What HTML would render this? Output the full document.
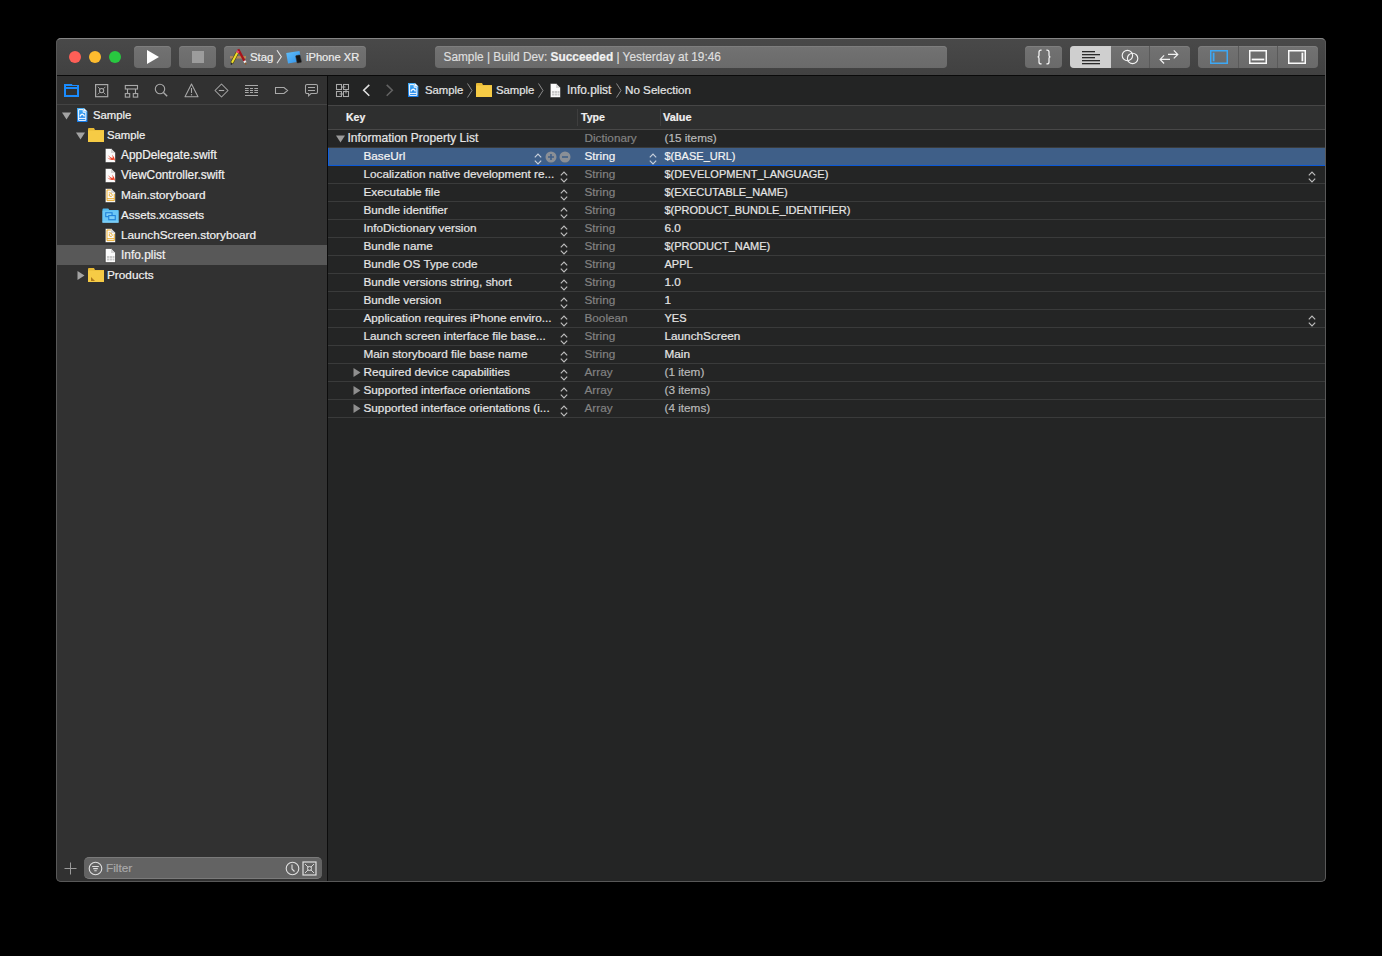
<!DOCTYPE html><html><head><meta charset="utf-8"><style>
*{margin:0;padding:0;box-sizing:border-box}
html,body{width:1382px;height:956px;background:#000;overflow:hidden}
body{font-family:"Liberation Sans",sans-serif;position:relative}
.r{position:absolute}
.t{position:absolute;white-space:nowrap;line-height:1;-webkit-text-stroke:0.2px currentColor}
.s{position:absolute;overflow:visible}
.btn{position:absolute;top:46px;height:22px;border-radius:4px;background:linear-gradient(#727272,#6a6a6a);box-shadow:inset 0 1px 0 #7e7e7e}
.light{position:absolute;top:51px;width:12px;height:12px;border-radius:50%}
.line{position:absolute;height:1px}
</style></head><body>
<div class="r" style="left:56px;top:38px;width:1270px;height:844px;border-radius:5px;background:#313131;overflow:hidden">
<div class="r" style="left:0;top:0;width:1270px;height:37px;background:linear-gradient(#494949,#414141)"></div>
<div class="r" style="left:0;top:37px;width:1270px;height:1px;background:#0a0a0a"></div>
<div class="r" style="left:1px;top:38px;width:270px;height:806px;background:#313131"></div>
<div class="r" style="left:271px;top:38px;width:1px;height:806px;background:#0c0c0c"></div>
<div class="r" style="left:272px;top:38px;width:998px;height:806px;background:#242525"></div>
</div>
<div class="light" style="left:69px;background:#fe5f57"></div>
<div class="light" style="left:89px;background:#febc2e"></div>
<div class="light" style="left:109px;background:#28c840"></div>
<div class="btn" style="left:134px;width:37px"></div>
<div class="btn" style="left:179px;width:37px"></div>
<div class="btn" style="left:224px;width:142px"></div>
<div class="btn" style="left:435px;width:512px"></div>
<div class="btn" style="left:1025px;width:37px"></div>
<div class="btn" style="left:1070px;width:120px;overflow:hidden"><div class="r" style="left:0;top:0;width:41px;height:22px;background:#cfcfcf"></div><div class="r" style="left:79px;top:0;width:1px;height:22px;background:#5a5a5a"></div></div>
<div class="btn" style="left:1198px;width:120px"><div class="r" style="left:40px;top:0;width:1px;height:22px;background:#5a5a5a"></div><div class="r" style="left:79px;top:0;width:1px;height:22px;background:#5a5a5a"></div></div>
<svg class="s" style="left:146px;top:49px;" width="14" height="16" viewBox="0 0 14 16"><path d="M1 1 L13 8 L1 15 Z" fill="#fff"/></svg>
<div class="r" style="left:192px;top:51px;width:12px;height:12px;background:#9c9c9c"></div>
<svg class="s" style="left:229px;top:47px;" width="18" height="20" viewBox="0 0 18 20"><rect x="1" y="9.1" width="16" height="2.4" fill="#b98a55"/><path d="M9.2 2.2 L15.6 14.2" stroke="#a8121a" stroke-width="2.4"/><path d="M15.4 13.8 L16.4 15.8" stroke="#f0f0f0" stroke-width="2.5"/><path d="M16.3 15.7 L16.9 17.6" stroke="#8a5a2a" stroke-width="1.6"/><path d="M8.5 5.3 L2.8 16" stroke="#4a3a08" stroke-width="3.2"/><path d="M8.5 5.3 L2.8 16" stroke="#ecdf2c" stroke-width="2.1"/><path d="M9.3 3.9 L8.3 5.8" stroke="#e8406a" stroke-width="2.6"/><path d="M2.9 15.8 L2.1 17.6" stroke="#2a2a2a" stroke-width="1.6"/></svg>
<div class="t" style="left:250px;top:52px;font-size:11.4px;color:#ececec;font-weight:normal;">Stag</div>
<svg class="s" style="left:276px;top:50px;" width="7" height="14" viewBox="0 0 7 14"><path d="M1 0.3 L5.3 6.8 L1 13.3" stroke="#e4e4e4" stroke-width="1.1" fill="none"/></svg>
<svg class="s" style="left:285px;top:49px;" width="18" height="16" viewBox="0 0 18 16"><defs><linearGradient id="dg" x1="0" y1="0" x2="1" y2="1"><stop offset="0" stop-color="#63c0fa"/><stop offset="1" stop-color="#2f8fe8"/></linearGradient></defs><path d="M1.2 3.9 L14.5 1.9 L16.3 12.3 L3 14.4 Z" fill="url(#dg)"/><rect x="11.3" y="6.2" width="4.6" height="7.6" rx="0.8" transform="rotate(-12 13.6 10)" fill="#141414" stroke="#3a3a3a" stroke-width="0.5"/></svg>
<div class="t" style="left:306px;top:52px;font-size:11.15px;color:#ececec;font-weight:normal;">iPhone XR</div>
<div class="t" style="left:443.5px;top:52px;font-size:11.85px;color:#dedede;font-weight:normal;">Sample | Build Dev: <b style="color:#f2f2f2">Succeeded</b> | Yesterday at 19:46</div>
<svg class="s" style="left:1036px;top:49px;" width="16" height="16" viewBox="0 0 16 16"><path d="M5.6 1 H5 Q3 1 3 3 V6.2 Q3 7.9 1.6 7.9 Q3 7.9 3 9.6 V12.9 Q3 14.9 5 14.9 H5.6 M10.4 1 H11 Q13 1 13 3 V6.2 Q13 7.9 14.4 7.9 Q13 7.9 13 9.6 V12.9 Q13 14.9 11 14.9 H10.4" stroke="#f4f4f4" stroke-width="1.25" fill="none"/></svg>
<svg class="s" style="left:1082px;top:50px;" width="19" height="15" viewBox="0 0 19 15"><rect x="0" y="1" width="13" height="1.3" fill="#2b2b2b"/><rect x="0" y="4" width="18" height="1.3" fill="#2b2b2b"/><rect x="0" y="7" width="13" height="1.3" fill="#2b2b2b"/><rect x="0" y="10" width="18" height="1.3" fill="#2b2b2b"/><rect x="0" y="13" width="18" height="1.3" fill="#2b2b2b"/></svg>
<svg class="s" style="left:1120px;top:48px;" width="20" height="18" viewBox="0 0 20 18"><circle cx="7.4" cy="7.5" r="5.2" stroke="#f2f2f2" stroke-width="1.15" fill="none"/><circle cx="12.6" cy="10.4" r="5.2" stroke="#f2f2f2" stroke-width="1.15" fill="none"/></svg>
<svg class="s" style="left:1158px;top:48px;" width="21" height="18" viewBox="0 0 21 18"><path d="M10 6.4 H19.5 M15.8 2.3 L19.8 6.4 L15.8 10.4" stroke="#f2f2f2" stroke-width="1.2" fill="none"/><path d="M12 11.4 H2.3 M6.1 7.4 L2.1 11.4 L6.1 15.5" stroke="#f2f2f2" stroke-width="1.2" fill="none"/></svg>
<svg class="s" style="left:1210px;top:50px;" width="18" height="14" viewBox="0 0 18 14"><rect x="0.75" y="0.75" width="16.5" height="12.5" stroke="#3da8f5" stroke-width="1.5" fill="none"/><rect x="2.7" y="2.7" width="1.8" height="8.6" fill="#3da8f5"/></svg>
<svg class="s" style="left:1249px;top:50px;" width="18" height="14" viewBox="0 0 18 14"><rect x="0.75" y="0.75" width="16.5" height="12.5" stroke="#fafafa" stroke-width="1.5" fill="none"/><rect x="2.7" y="8.6" width="12.6" height="1.8" fill="#fafafa"/></svg>
<svg class="s" style="left:1288px;top:50px;" width="18" height="14" viewBox="0 0 18 14"><rect x="0.75" y="0.75" width="16.5" height="12.5" stroke="#fafafa" stroke-width="1.5" fill="none"/><rect x="13.5" y="2.7" width="1.8" height="8.6" fill="#fafafa"/></svg>
<div class="line" style="left:57px;top:104px;width:270px;background:#434343"></div>
<svg class="s" style="left:63px;top:83px;" width="17" height="15" viewBox="0 0 17 15"><path fill-rule="evenodd" d="M1 1 H9.2 V2 H16 V14 H1 Z M3 3 H14 V4.1 H3 Z M3 5.9 H14 V12 H3 Z" fill="#1a8cff"/></svg>
<svg class="s" style="left:94px;top:83px;" width="15" height="15" viewBox="0 0 15 15"><rect x="1.6" y="1.6" width="12.1" height="12.1" stroke="#a9a9a9" stroke-width="1.2" fill="none"/><circle cx="7.6" cy="7.6" r="2.1" stroke="#a9a9a9" stroke-width="1.1" fill="none"/><path d="M3.8 3.8 L5.9 5.9 M11.4 3.8 L9.3 5.9 M3.8 11.4 L5.9 9.3 M11.4 11.4 L9.3 9.3" stroke="#a9a9a9" stroke-width="0.9"/></svg>
<svg class="s" style="left:124px;top:84px;" width="15" height="15" viewBox="0 0 15 15"><rect x="1.3" y="1.5" width="12.2" height="3.5" stroke="#a9a9a9" stroke-width="1.1" fill="none"/><rect x="1.3" y="9.6" width="4.4" height="3.5" stroke="#a9a9a9" stroke-width="1.1" fill="none"/><rect x="9.3" y="9.6" width="4.4" height="3.5" stroke="#a9a9a9" stroke-width="1.1" fill="none"/><path d="M3.5 5 V9.6 M11.5 5 V9.6" stroke="#a9a9a9" stroke-width="1.1"/></svg>
<svg class="s" style="left:154px;top:83px;" width="15" height="15" viewBox="0 0 15 15"><circle cx="6" cy="6" r="4.7" stroke="#a9a9a9" stroke-width="1.1" fill="none"/><path d="M9.4 9.4 L13.2 13.2" stroke="#a9a9a9" stroke-width="1.4"/></svg>
<svg class="s" style="left:184px;top:83px;" width="15" height="15" viewBox="0 0 15 15"><path d="M7.5 1 L14 13.7 H1 Z" stroke="#a9a9a9" stroke-width="1.05" fill="none" stroke-linejoin="round"/><path d="M7.5 5 V10" stroke="#a9a9a9" stroke-width="1.1"/><circle cx="7.5" cy="11.8" r="0.7" fill="#a9a9a9"/></svg>
<svg class="s" style="left:214px;top:83px;" width="15" height="15" viewBox="0 0 15 15"><path d="M7.5 1 L14 7.5 L7.5 14 L1 7.5 Z" stroke="#a9a9a9" stroke-width="1.05" fill="none" stroke-linejoin="round"/><path d="M4.8 7.5 H10.2" stroke="#a9a9a9" stroke-width="1.1"/></svg>
<svg class="s" style="left:244px;top:84px;" width="15" height="14" viewBox="0 0 15 14"><path d="M1 1.5 H14 M1 11.5 H14" stroke="#a9a9a9" stroke-width="1"/><path d="M1 4.5 H4.7 M6 4.5 H9 M10.3 4.5 H14" stroke="#a9a9a9" stroke-width="1"/><path d="M1 6.5 H4.7 M6 6.5 H9 M10.3 6.5 H14" stroke="#a9a9a9" stroke-width="1"/><path d="M1 8.5 H4.7 M6 8.5 H9 M10.3 8.5 H14" stroke="#a9a9a9" stroke-width="1"/></svg>
<svg class="s" style="left:274px;top:86px;" width="15" height="10" viewBox="0 0 15 10"><path d="M1.5 1.5 H10 L13.6 4.5 L10 7.5 H1.5 Z" stroke="#a9a9a9" stroke-width="1.05" fill="none"/></svg>
<svg class="s" style="left:304px;top:83px;" width="15" height="15" viewBox="0 0 15 15"><path d="M3 1.5 H12 Q13.5 1.5 13.5 3 V9 Q13.5 10.5 12 10.5 H7 L4.6 12.8 V10.5 H3 Q1.5 10.5 1.5 9 V3 Q1.5 1.5 3 1.5 Z" stroke="#a9a9a9" stroke-width="1.05" fill="none"/><path d="M4 4.5 H11 M4 7.5 H11" stroke="#a9a9a9" stroke-width="1"/></svg>
<div class="r" style="left:57px;top:245px;width:270px;height:20px;background:#585858"></div>
<svg class="s" style="left:62px;top:112px;" width="9" height="8" viewBox="0 0 9 8"><path d="M0 0.5 H9 L4.5 7.5 Z" fill="#a3a3a3"/></svg>
<svg class="s" style="left:77px;top:108px;" width="11" height="14" viewBox="0 0 11 14"><defs><linearGradient id="pg" x1="0" y1="0" x2="0" y2="1"><stop offset="0" stop-color="#45aef7"/><stop offset="1" stop-color="#1479e6"/></linearGradient></defs><path d="M0 0 H6.8 L10.4 3.6 V14 H0 Z" fill="url(#pg)"/><path d="M6.8 0 V3.6 H10.4 Z" fill="#f2f8ff"/><path d="M1.6 1.6 H6.2 V4.3 H8.8 V12.4 H1.6 Z" stroke="#f2f8ff" stroke-width="1" fill="none"/><path d="M3.3 8.6 V7.6 Q5.2 4.9 7.1 7.6 V8.6" stroke="#f2f8ff" stroke-width="1.4" fill="none"/><path d="M1.6 10.4 H8.8" stroke="#f2f8ff" stroke-width="1.1"/></svg>
<div class="t" style="left:93px;top:110px;font-size:11.3px;color:#f2f2f2;font-weight:normal;">Sample</div>
<svg class="s" style="left:76px;top:132px;" width="9" height="8" viewBox="0 0 9 8"><path d="M0 0.5 H9 L4.5 7.5 Z" fill="#a3a3a3"/></svg>
<svg class="s" style="left:88px;top:128px;" width="16" height="14" viewBox="0 0 16 14"><path d="M0 1 Q0 0 1 0 H6 L7 2 H16 V14 H0 Z" fill="#e7b935"/><rect x="0" y="2.5" width="16" height="11.5" fill="#f6cb45"/></svg>
<div class="t" style="left:107px;top:130px;font-size:11.3px;color:#f2f2f2;font-weight:normal;">Sample</div>
<svg class="s" style="left:104.5px;top:147.5px;" width="11" height="15" viewBox="0 0 11 15"><path d="M0.3 0.4 H6 L10.5 4.9 V14.6 H0.3 Z" fill="#fbfbfb" stroke="#151515" stroke-width="0.5"/><path d="M6 0.4 V4.9 H10.5 Z" fill="#d6d6d6"/><path d="M2 9.6 Q4.8 12.8 8.6 11.8 Q9.6 12.2 9.9 13 Q10.2 10 6.9 6.6 Q8 8.8 7.5 10.2 Q5.2 9.2 2.8 7 Q4.6 9.4 5.8 10.6 Q3.8 10.8 2 9.6 Z" fill="#f2452a"/></svg>
<div class="t" style="left:121px;top:150px;font-size:11.9px;color:#f2f2f2;font-weight:normal;">AppDelegate.swift</div>
<svg class="s" style="left:104.5px;top:167.5px;" width="11" height="15" viewBox="0 0 11 15"><path d="M0.3 0.4 H6 L10.5 4.9 V14.6 H0.3 Z" fill="#fbfbfb" stroke="#151515" stroke-width="0.5"/><path d="M6 0.4 V4.9 H10.5 Z" fill="#d6d6d6"/><path d="M2 9.6 Q4.8 12.8 8.6 11.8 Q9.6 12.2 9.9 13 Q10.2 10 6.9 6.6 Q8 8.8 7.5 10.2 Q5.2 9.2 2.8 7 Q4.6 9.4 5.8 10.6 Q3.8 10.8 2 9.6 Z" fill="#f2452a"/></svg>
<div class="t" style="left:121px;top:170px;font-size:11.9px;color:#f2f2f2;font-weight:normal;">ViewController.swift</div>
<svg class="s" style="left:104.5px;top:187.5px;" width="11" height="15" viewBox="0 0 11 15"><path d="M0.3 0.4 H6 L10.5 4.9 V14.6 H0.3 Z" fill="#fbfbfb" stroke="#151515" stroke-width="0.5"/><path d="M6 0.4 V4.9 H10.5 Z" fill="#d6d6d6"/><path d="M2 2 H5.8 M9.3 5.8 V12.6 H2 V2" stroke="#eaa925" stroke-width="0.95" fill="none"/><path d="M2 10.7 H9.3" stroke="#eaa925" stroke-width="0.95"/><path d="M3.8 4.8 Q6.8 4.2 7.4 7.4 Q6.6 9 4.6 8.2 Q3.6 7 4.6 6" stroke="#eaa925" stroke-width="0.9" fill="none"/></svg>
<div class="t" style="left:121px;top:190px;font-size:11.8px;color:#f2f2f2;font-weight:normal;">Main.storyboard</div>
<svg class="s" style="left:101.5px;top:207.5px;" width="17" height="15" viewBox="0 0 17 15"><path d="M0.5 1.5 Q0.5 0.5 1.5 0.5 H6.3 L7.3 2.1 H16.5 V14.5 H0.5 Z" fill="#52b9ef"/><rect x="0.5" y="2.6" width="16" height="11.9" fill="#6ac6f6"/><rect x="0.5" y="13.6" width="16" height="0.9" fill="#8ed6fa"/><rect x="3.75" y="4.75" width="6.3" height="3.9" stroke="#1f80d8" stroke-width="1.1" fill="#7fd0f8"/><rect x="6.75" y="7.6" width="6.5" height="4.1" stroke="#1f80d8" stroke-width="1.1" fill="#7fd0f8"/></svg>
<div class="t" style="left:121px;top:209px;font-size:11.6px;color:#f2f2f2;font-weight:normal;">Assets.xcassets</div>
<svg class="s" style="left:104.5px;top:227.5px;" width="11" height="15" viewBox="0 0 11 15"><path d="M0.3 0.4 H6 L10.5 4.9 V14.6 H0.3 Z" fill="#fbfbfb" stroke="#151515" stroke-width="0.5"/><path d="M6 0.4 V4.9 H10.5 Z" fill="#d6d6d6"/><path d="M2 2 H5.8 M9.3 5.8 V12.6 H2 V2" stroke="#eaa925" stroke-width="0.95" fill="none"/><path d="M2 10.7 H9.3" stroke="#eaa925" stroke-width="0.95"/><path d="M3.8 4.8 Q6.8 4.2 7.4 7.4 Q6.6 9 4.6 8.2 Q3.6 7 4.6 6" stroke="#eaa925" stroke-width="0.9" fill="none"/></svg>
<div class="t" style="left:121px;top:230px;font-size:11.8px;color:#f2f2f2;font-weight:normal;">LaunchScreen.storyboard</div>
<svg class="s" style="left:104.5px;top:247.5px;" width="11" height="15" viewBox="0 0 11 15"><path d="M0.3 0.4 H6 L10.5 4.9 V14.6 H0.3 Z" fill="#fbfbfb" stroke="#151515" stroke-width="0.5"/><path d="M6 0.4 V4.9 H10.5 Z" fill="#d6d6d6"/><g fill="#c9c9c9"><rect x="2" y="8" width="2.5" height="2"/><rect x="5" y="8" width="2.5" height="2"/><rect x="8" y="8" width="1.5" height="2"/><rect x="2" y="10.5" width="2.5" height="2"/><rect x="5" y="10.5" width="2.5" height="2"/><rect x="8" y="10.5" width="1.5" height="2"/></g></svg>
<div class="t" style="left:121px;top:250px;font-size:11.9px;color:#f2f2f2;font-weight:normal;">Info.plist</div>
<svg class="s" style="left:77px;top:271px;" width="8" height="9" viewBox="0 0 8 9"><path d="M0.5 0 V9 L7.5 4.5 Z" fill="#a3a3a3"/></svg>
<svg class="s" style="left:88px;top:268px;" width="16" height="14" viewBox="0 0 16 14"><path d="M0 1 Q0 0 1 0 H6 L7 2 H16 V14 H0 Z" fill="#e7b935"/><rect x="0" y="2.5" width="16" height="11.5" fill="#f6cb45"/><path d="M3 13 L3 9 L7 13 Z" fill="#b07a1a"/></svg>
<div class="t" style="left:107px;top:270px;font-size:11.8px;color:#f2f2f2;font-weight:normal;">Products</div>
<svg class="s" style="left:64px;top:862px;" width="13" height="13" viewBox="0 0 13 13"><path d="M6.5 0.5 V12.5 M0.5 6.5 H12.5" stroke="#9a9a9a" stroke-width="1"/></svg>
<div class="r" style="left:84px;top:857px;width:238px;height:22px;border-radius:5px;background:#636363;border-top:1px solid #7a7a7a;border-bottom:1px solid #7a7a7a"></div>
<svg class="s" style="left:88px;top:861px;" width="15" height="15" viewBox="0 0 15 15"><circle cx="7.5" cy="7.5" r="6.3" stroke="#e0e0e0" stroke-width="1.1" fill="none"/><path d="M4.2 5.5 H10.8 M5.2 7.6 H9.8 M6.3 9.7 H8.7" stroke="#e0e0e0" stroke-width="1.1"/></svg>
<div class="t" style="left:106px;top:863px;font-size:11.8px;color:#a9a9a9;font-weight:normal;">Filter</div>
<svg class="s" style="left:285px;top:861px;" width="15" height="15" viewBox="0 0 15 15"><circle cx="7.5" cy="7.5" r="6.3" stroke="#e0e0e0" stroke-width="1.1" fill="none"/><path d="M7 3.5 V8 L9.5 10.5" stroke="#e0e0e0" stroke-width="1.1" fill="none"/></svg>
<svg class="s" style="left:302px;top:861px;" width="15" height="15" viewBox="0 0 15 15"><rect x="1" y="1" width="13" height="13" stroke="#e0e0e0" stroke-width="1.2" fill="none"/><circle cx="7.5" cy="7.5" r="2" stroke="#e0e0e0" fill="none"/><path d="M3 3 L6 6 M12 3 L9 6 M3 12 L6 9 M12 12 L9 9" stroke="#e0e0e0" stroke-width="0.9"/></svg>
<div class="r" style="left:328px;top:76px;width:997px;height:29px;background:#232424"></div>
<div class="line" style="left:328px;top:105px;width:997px;background:#464646"></div>
<svg class="s" style="left:335px;top:83px;" width="15" height="15" viewBox="0 0 15 15"><rect x="1.5" y="1.5" width="5" height="5" stroke="#a9a9a9" stroke-width="1.05" fill="none"/><rect x="8.5" y="1.5" width="5" height="5" stroke="#a9a9a9" stroke-width="1.05" fill="none"/><rect x="1.5" y="8.5" width="5" height="5" stroke="#a9a9a9" stroke-width="1.05" fill="none"/><rect x="8.5" y="8.5" width="5" height="5" stroke="#a9a9a9" stroke-width="1.05" fill="none"/><path d="M6.5 4 H10.5 M11 6.5 V10.5 M4.5 11 H8.5" stroke="#a9a9a9" stroke-width="1"/></svg>
<svg class="s" style="left:362px;top:84px;" width="9" height="13" viewBox="0 0 9 13"><path d="M7.3 0.9 L1.7 6.3 L7.3 11.7" stroke="#e2e2e2" stroke-width="1.55" fill="none"/></svg>
<svg class="s" style="left:385px;top:84px;" width="9" height="13" viewBox="0 0 9 13"><path d="M1.7 0.9 L7.3 6.3 L1.7 11.7" stroke="#636363" stroke-width="1.55" fill="none"/></svg>
<svg class="s" style="left:408px;top:83px;" width="11" height="14" viewBox="0 0 11 14"><defs><linearGradient id="pg" x1="0" y1="0" x2="0" y2="1"><stop offset="0" stop-color="#45aef7"/><stop offset="1" stop-color="#1479e6"/></linearGradient></defs><path d="M0 0 H6.8 L10.4 3.6 V14 H0 Z" fill="url(#pg)"/><path d="M6.8 0 V3.6 H10.4 Z" fill="#f2f8ff"/><path d="M1.6 1.6 H6.2 V4.3 H8.8 V12.4 H1.6 Z" stroke="#f2f8ff" stroke-width="1" fill="none"/><path d="M3.3 8.6 V7.6 Q5.2 4.9 7.1 7.6 V8.6" stroke="#f2f8ff" stroke-width="1.4" fill="none"/><path d="M1.6 10.4 H8.8" stroke="#f2f8ff" stroke-width="1.1"/></svg>
<div class="t" style="left:425px;top:85px;font-size:11.3px;color:#e4e4e4;font-weight:normal;">Sample</div>
<svg class="s" style="left:466px;top:83px;" width="8" height="15" viewBox="0 0 8 15"><path d="M1.5 0.5 L6 7.5 L1.5 14.5" stroke="#8a8a8a" stroke-width="1" fill="none"/></svg>
<svg class="s" style="left:476px;top:83px;" width="16" height="14" viewBox="0 0 16 14"><path d="M0 1 Q0 0 1 0 H6 L7 2 H16 V14 H0 Z" fill="#e7b935"/><rect x="0" y="2.5" width="16" height="11.5" fill="#f6cb45"/></svg>
<div class="t" style="left:496px;top:85px;font-size:11.3px;color:#e4e4e4;font-weight:normal;">Sample</div>
<svg class="s" style="left:537px;top:83px;" width="8" height="15" viewBox="0 0 8 15"><path d="M1.5 0.5 L6 7.5 L1.5 14.5" stroke="#8a8a8a" stroke-width="1" fill="none"/></svg>
<svg class="s" style="left:550px;top:82.5px;" width="11" height="15" viewBox="0 0 11 15"><path d="M0.3 0.4 H6 L10.5 4.9 V14.6 H0.3 Z" fill="#fbfbfb" stroke="#151515" stroke-width="0.5"/><path d="M6 0.4 V4.9 H10.5 Z" fill="#d6d6d6"/><g fill="#c9c9c9"><rect x="2" y="8" width="2.5" height="2"/><rect x="5" y="8" width="2.5" height="2"/><rect x="8" y="8" width="1.5" height="2"/><rect x="2" y="10.5" width="2.5" height="2"/><rect x="5" y="10.5" width="2.5" height="2"/><rect x="8" y="10.5" width="1.5" height="2"/></g></svg>
<div class="t" style="left:567px;top:85px;font-size:11.9px;color:#e4e4e4;font-weight:normal;">Info.plist</div>
<svg class="s" style="left:615px;top:83px;" width="8" height="15" viewBox="0 0 8 15"><path d="M1.5 0.5 L6 7.5 L1.5 14.5" stroke="#8a8a8a" stroke-width="1" fill="none"/></svg>
<div class="t" style="left:625px;top:84px;font-size:11.65px;color:#e4e4e4;font-weight:normal;">No Selection</div>
<div class="r" style="left:328px;top:106px;width:997px;height:23px;background:#2e2f2f"></div>
<div class="line" style="left:328px;top:129px;width:997px;background:#484848"></div>
<div class="r" style="left:577px;top:109px;width:1px;height:17px;background:#3e3e3e"></div>
<div class="r" style="left:660px;top:109px;width:1px;height:17px;background:#3e3e3e"></div>
<div class="t" style="left:346px;top:112px;font-size:10.5px;color:#f0f0f0;font-weight:bold;">Key</div>
<div class="t" style="left:581px;top:112px;font-size:10.6px;color:#f0f0f0;font-weight:bold;">Type</div>
<div class="t" style="left:663px;top:112px;font-size:10.9px;color:#f0f0f0;font-weight:bold;">Value</div>
<div class="line" style="left:328px;top:147px;width:997px;background:#3a3b3b"></div>
<svg class="s" style="left:336px;top:135px;" width="9" height="8" viewBox="0 0 9 8"><path d="M0 0.5 H9 L4.5 7.5 Z" fill="#9a9a9a"/></svg>
<div class="t" style="left:347.5px;top:132px;font-size:12px;color:#e6e6e6;font-weight:normal;">Information Property List</div>
<div class="t" style="left:584.5px;top:132px;font-size:11.75px;color:#828282;font-weight:normal;">Dictionary</div>
<div class="t" style="left:664.5px;top:132px;font-size:11.75px;color:#b9b9b9;font-weight:normal;">(15 items)</div>
<div class="r" style="left:328px;top:166px;width:997px;height:0"></div>
<div class="r" style="left:328px;top:148px;width:998px;height:18px;background:#3f5f88;border-left:1px solid #0f5fe0;border-right:1px solid #1f74ea;border-bottom:1px solid #0b59d8"></div>
<div class="t" style="left:363.5px;top:150px;font-size:11.75px;color:#f4f4f4;font-weight:normal;">BaseUrl</div>
<svg class="s" style="left:534px;top:153px;" width="8" height="12" viewBox="0 0 8 12"><path d="M0.8 4.3 L4 1 L7.2 4.3 M0.8 7.7 L4 11 L7.2 7.7" stroke="#c8d0dc" stroke-width="1.15" fill="none"/></svg>
<svg class="s" style="left:545px;top:151px;" width="12" height="12" viewBox="0 0 12 12"><circle cx="6" cy="6" r="5.5" fill="#8a8f96"/><path d="M6 3 V9 M3 6 H9" stroke="#3f5f88" stroke-width="1.6"/></svg>
<svg class="s" style="left:559px;top:151px;" width="12" height="12" viewBox="0 0 12 12"><circle cx="6" cy="6" r="5.5" fill="#8a8f96"/><path d="M3 6 H9" stroke="#3f5f88" stroke-width="1.6"/></svg>
<div class="t" style="left:584.5px;top:150px;font-size:11.75px;color:#f4f4f4;font-weight:normal;">String</div>
<svg class="s" style="left:649px;top:153px;" width="8" height="12" viewBox="0 0 8 12"><path d="M0.8 4.3 L4 1 L7.2 4.3 M0.8 7.7 L4 11 L7.2 7.7" stroke="#c8d0dc" stroke-width="1.15" fill="none"/></svg>
<div class="t" style="left:664.5px;top:151px;font-size:11.0px;color:#f4f4f4;font-weight:normal;">$(BASE_URL)</div>
<div class="line" style="left:328px;top:183px;width:997px;background:#3a3b3b"></div>
<div class="t" style="left:363.5px;top:168px;font-size:11.75px;color:#e6e6e6;font-weight:normal;">Localization native development re...</div>
<svg class="s" style="left:560px;top:171px;" width="8" height="12" viewBox="0 0 8 12"><path d="M0.8 4.3 L4 1 L7.2 4.3 M0.8 7.7 L4 11 L7.2 7.7" stroke="#bdbdbd" stroke-width="1.15" fill="none"/></svg>
<div class="t" style="left:584.5px;top:168px;font-size:11.75px;color:#828282;font-weight:normal;">String</div>
<div class="t" style="left:664.5px;top:169px;font-size:11.0px;color:#e6e6e6;font-weight:normal;">$(DEVELOPMENT_LANGUAGE)</div>
<svg class="s" style="left:1308px;top:171px;" width="8" height="12" viewBox="0 0 8 12"><path d="M0.8 4.3 L4 1 L7.2 4.3 M0.8 7.7 L4 11 L7.2 7.7" stroke="#bdbdbd" stroke-width="1.15" fill="none"/></svg>
<div class="line" style="left:328px;top:201px;width:997px;background:#3a3b3b"></div>
<div class="t" style="left:363.5px;top:186px;font-size:11.75px;color:#e6e6e6;font-weight:normal;">Executable file</div>
<svg class="s" style="left:560px;top:189px;" width="8" height="12" viewBox="0 0 8 12"><path d="M0.8 4.3 L4 1 L7.2 4.3 M0.8 7.7 L4 11 L7.2 7.7" stroke="#bdbdbd" stroke-width="1.15" fill="none"/></svg>
<div class="t" style="left:584.5px;top:186px;font-size:11.75px;color:#828282;font-weight:normal;">String</div>
<div class="t" style="left:664.5px;top:187px;font-size:11.0px;color:#e6e6e6;font-weight:normal;">$(EXECUTABLE_NAME)</div>
<div class="line" style="left:328px;top:219px;width:997px;background:#3a3b3b"></div>
<div class="t" style="left:363.5px;top:204px;font-size:11.75px;color:#e6e6e6;font-weight:normal;">Bundle identifier</div>
<svg class="s" style="left:560px;top:207px;" width="8" height="12" viewBox="0 0 8 12"><path d="M0.8 4.3 L4 1 L7.2 4.3 M0.8 7.7 L4 11 L7.2 7.7" stroke="#bdbdbd" stroke-width="1.15" fill="none"/></svg>
<div class="t" style="left:584.5px;top:204px;font-size:11.75px;color:#828282;font-weight:normal;">String</div>
<div class="t" style="left:664.5px;top:205px;font-size:11.0px;color:#e6e6e6;font-weight:normal;">$(PRODUCT_BUNDLE_IDENTIFIER)</div>
<div class="line" style="left:328px;top:237px;width:997px;background:#3a3b3b"></div>
<div class="t" style="left:363.5px;top:222px;font-size:11.75px;color:#e6e6e6;font-weight:normal;">InfoDictionary version</div>
<svg class="s" style="left:560px;top:225px;" width="8" height="12" viewBox="0 0 8 12"><path d="M0.8 4.3 L4 1 L7.2 4.3 M0.8 7.7 L4 11 L7.2 7.7" stroke="#bdbdbd" stroke-width="1.15" fill="none"/></svg>
<div class="t" style="left:584.5px;top:222px;font-size:11.75px;color:#828282;font-weight:normal;">String</div>
<div class="t" style="left:664.5px;top:222px;font-size:11.75px;color:#e6e6e6;font-weight:normal;">6.0</div>
<div class="line" style="left:328px;top:255px;width:997px;background:#3a3b3b"></div>
<div class="t" style="left:363.5px;top:240px;font-size:11.75px;color:#e6e6e6;font-weight:normal;">Bundle name</div>
<svg class="s" style="left:560px;top:243px;" width="8" height="12" viewBox="0 0 8 12"><path d="M0.8 4.3 L4 1 L7.2 4.3 M0.8 7.7 L4 11 L7.2 7.7" stroke="#bdbdbd" stroke-width="1.15" fill="none"/></svg>
<div class="t" style="left:584.5px;top:240px;font-size:11.75px;color:#828282;font-weight:normal;">String</div>
<div class="t" style="left:664.5px;top:241px;font-size:11.0px;color:#e6e6e6;font-weight:normal;">$(PRODUCT_NAME)</div>
<div class="line" style="left:328px;top:273px;width:997px;background:#3a3b3b"></div>
<div class="t" style="left:363.5px;top:258px;font-size:11.75px;color:#e6e6e6;font-weight:normal;">Bundle OS Type code</div>
<svg class="s" style="left:560px;top:261px;" width="8" height="12" viewBox="0 0 8 12"><path d="M0.8 4.3 L4 1 L7.2 4.3 M0.8 7.7 L4 11 L7.2 7.7" stroke="#bdbdbd" stroke-width="1.15" fill="none"/></svg>
<div class="t" style="left:584.5px;top:258px;font-size:11.75px;color:#828282;font-weight:normal;">String</div>
<div class="t" style="left:664.5px;top:259px;font-size:11.0px;color:#e6e6e6;font-weight:normal;">APPL</div>
<div class="line" style="left:328px;top:291px;width:997px;background:#3a3b3b"></div>
<div class="t" style="left:363.5px;top:276px;font-size:11.75px;color:#e6e6e6;font-weight:normal;">Bundle versions string, short</div>
<svg class="s" style="left:560px;top:279px;" width="8" height="12" viewBox="0 0 8 12"><path d="M0.8 4.3 L4 1 L7.2 4.3 M0.8 7.7 L4 11 L7.2 7.7" stroke="#bdbdbd" stroke-width="1.15" fill="none"/></svg>
<div class="t" style="left:584.5px;top:276px;font-size:11.75px;color:#828282;font-weight:normal;">String</div>
<div class="t" style="left:664.5px;top:276px;font-size:11.75px;color:#e6e6e6;font-weight:normal;">1.0</div>
<div class="line" style="left:328px;top:309px;width:997px;background:#3a3b3b"></div>
<div class="t" style="left:363.5px;top:294px;font-size:11.75px;color:#e6e6e6;font-weight:normal;">Bundle version</div>
<svg class="s" style="left:560px;top:297px;" width="8" height="12" viewBox="0 0 8 12"><path d="M0.8 4.3 L4 1 L7.2 4.3 M0.8 7.7 L4 11 L7.2 7.7" stroke="#bdbdbd" stroke-width="1.15" fill="none"/></svg>
<div class="t" style="left:584.5px;top:294px;font-size:11.75px;color:#828282;font-weight:normal;">String</div>
<div class="t" style="left:664.5px;top:294px;font-size:11.75px;color:#e6e6e6;font-weight:normal;">1</div>
<div class="line" style="left:328px;top:327px;width:997px;background:#3a3b3b"></div>
<div class="t" style="left:363.5px;top:312px;font-size:11.75px;color:#e6e6e6;font-weight:normal;">Application requires iPhone enviro...</div>
<svg class="s" style="left:560px;top:315px;" width="8" height="12" viewBox="0 0 8 12"><path d="M0.8 4.3 L4 1 L7.2 4.3 M0.8 7.7 L4 11 L7.2 7.7" stroke="#bdbdbd" stroke-width="1.15" fill="none"/></svg>
<div class="t" style="left:584.5px;top:312px;font-size:11.75px;color:#828282;font-weight:normal;">Boolean</div>
<div class="t" style="left:664.5px;top:313px;font-size:11.0px;color:#e6e6e6;font-weight:normal;">YES</div>
<svg class="s" style="left:1308px;top:315px;" width="8" height="12" viewBox="0 0 8 12"><path d="M0.8 4.3 L4 1 L7.2 4.3 M0.8 7.7 L4 11 L7.2 7.7" stroke="#bdbdbd" stroke-width="1.15" fill="none"/></svg>
<div class="line" style="left:328px;top:345px;width:997px;background:#3a3b3b"></div>
<div class="t" style="left:363.5px;top:330px;font-size:11.75px;color:#e6e6e6;font-weight:normal;">Launch screen interface file base...</div>
<svg class="s" style="left:560px;top:333px;" width="8" height="12" viewBox="0 0 8 12"><path d="M0.8 4.3 L4 1 L7.2 4.3 M0.8 7.7 L4 11 L7.2 7.7" stroke="#bdbdbd" stroke-width="1.15" fill="none"/></svg>
<div class="t" style="left:584.5px;top:330px;font-size:11.75px;color:#828282;font-weight:normal;">String</div>
<div class="t" style="left:664.5px;top:330px;font-size:11.75px;color:#e6e6e6;font-weight:normal;">LaunchScreen</div>
<div class="line" style="left:328px;top:363px;width:997px;background:#3a3b3b"></div>
<div class="t" style="left:363.5px;top:348px;font-size:11.75px;color:#e6e6e6;font-weight:normal;">Main storyboard file base name</div>
<svg class="s" style="left:560px;top:351px;" width="8" height="12" viewBox="0 0 8 12"><path d="M0.8 4.3 L4 1 L7.2 4.3 M0.8 7.7 L4 11 L7.2 7.7" stroke="#bdbdbd" stroke-width="1.15" fill="none"/></svg>
<div class="t" style="left:584.5px;top:348px;font-size:11.75px;color:#828282;font-weight:normal;">String</div>
<div class="t" style="left:664.5px;top:348px;font-size:11.75px;color:#e6e6e6;font-weight:normal;">Main</div>
<div class="line" style="left:328px;top:381px;width:997px;background:#3a3b3b"></div>
<svg class="s" style="left:353px;top:368px;" width="8" height="9" viewBox="0 0 8 9"><path d="M0.5 0 V9 L7.5 4.5 Z" fill="#8f8f8f"/></svg>
<div class="t" style="left:363.5px;top:366px;font-size:11.75px;color:#e6e6e6;font-weight:normal;">Required device capabilities</div>
<svg class="s" style="left:560px;top:369px;" width="8" height="12" viewBox="0 0 8 12"><path d="M0.8 4.3 L4 1 L7.2 4.3 M0.8 7.7 L4 11 L7.2 7.7" stroke="#bdbdbd" stroke-width="1.15" fill="none"/></svg>
<div class="t" style="left:584.5px;top:366px;font-size:11.75px;color:#828282;font-weight:normal;">Array</div>
<div class="t" style="left:664.5px;top:366px;font-size:11.75px;color:#b9b9b9;font-weight:normal;">(1 item)</div>
<div class="line" style="left:328px;top:399px;width:997px;background:#3a3b3b"></div>
<svg class="s" style="left:353px;top:386px;" width="8" height="9" viewBox="0 0 8 9"><path d="M0.5 0 V9 L7.5 4.5 Z" fill="#8f8f8f"/></svg>
<div class="t" style="left:363.5px;top:384px;font-size:11.75px;color:#e6e6e6;font-weight:normal;">Supported interface orientations</div>
<svg class="s" style="left:560px;top:387px;" width="8" height="12" viewBox="0 0 8 12"><path d="M0.8 4.3 L4 1 L7.2 4.3 M0.8 7.7 L4 11 L7.2 7.7" stroke="#bdbdbd" stroke-width="1.15" fill="none"/></svg>
<div class="t" style="left:584.5px;top:384px;font-size:11.75px;color:#828282;font-weight:normal;">Array</div>
<div class="t" style="left:664.5px;top:384px;font-size:11.75px;color:#b9b9b9;font-weight:normal;">(3 items)</div>
<div class="line" style="left:328px;top:417px;width:997px;background:#3a3b3b"></div>
<svg class="s" style="left:353px;top:404px;" width="8" height="9" viewBox="0 0 8 9"><path d="M0.5 0 V9 L7.5 4.5 Z" fill="#8f8f8f"/></svg>
<div class="t" style="left:363.5px;top:402px;font-size:11.75px;color:#e6e6e6;font-weight:normal;">Supported interface orientations (i...</div>
<svg class="s" style="left:560px;top:405px;" width="8" height="12" viewBox="0 0 8 12"><path d="M0.8 4.3 L4 1 L7.2 4.3 M0.8 7.7 L4 11 L7.2 7.7" stroke="#bdbdbd" stroke-width="1.15" fill="none"/></svg>
<div class="t" style="left:584.5px;top:402px;font-size:11.75px;color:#828282;font-weight:normal;">Array</div>
<div class="t" style="left:664.5px;top:402px;font-size:11.75px;color:#b9b9b9;font-weight:normal;">(4 items)</div>
<div class="r" style="left:56px;top:38px;width:1270px;height:844px;border-radius:5px;border:1px solid #585858;border-top-color:#858585"></div>
</body></html>
